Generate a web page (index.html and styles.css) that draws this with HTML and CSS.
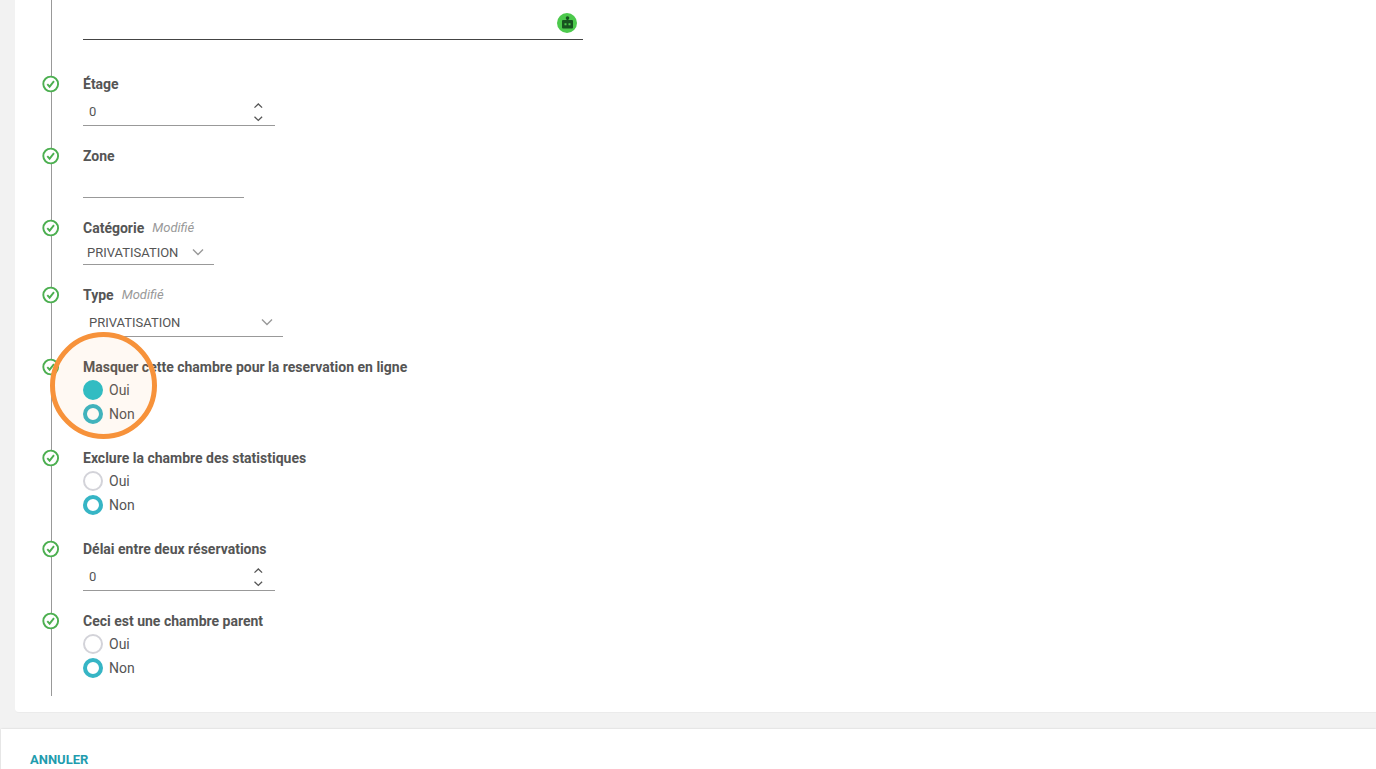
FILE: index.html
```
<!DOCTYPE html>
<html lang="fr">
<head>
    <meta charset="UTF-8">
    <meta name="viewport" content="width=device-width, initial-scale=1.0">
    <title>Chambre</title>
    <link rel="stylesheet" href="styles.css">
</head>
<body>
    <!-- Icônes réutilisées -->
    <svg class="sprite" aria-hidden="true">
        <symbol id="check" viewBox="0 0 18 18">
            <circle cx="8.7" cy="9" r="7.4" fill="#fff" stroke="#4caf50" stroke-width="1.9"/>
            <path d="M5.3 9.2l2.3 2.5 4.4-5.5" fill="none" stroke="#4caf50" stroke-width="1.9"/>
        </symbol>
        <symbol id="up" viewBox="0 0 10 6">
            <path d="M1.5 4.6L5.3 1 9.1 4.6" fill="none" stroke="#555" stroke-width="1.3"/>
        </symbol>
        <symbol id="down" viewBox="0 0 10 6">
            <path d="M1.5 .8L5.3 4.4 9.1 .8" fill="none" stroke="#555" stroke-width="1.3"/>
        </symbol>
    </svg>

    <form id="roomForm">
        <main class="card">
            <div class="timeline">
                <div class="description">
                    <textarea class="line-input" aria-label="Description"></textarea>
                    <button type="button" class="bot" aria-label="Assistant">
                        <svg viewBox="0 0 20 20">
                            <circle cx="10" cy="10" r="10" fill="#4cc94c"/>
                            <circle cx="10.5" cy="5" r="1.8" fill="#17521f"/>
                            <path d="M9.7 5h1.6v3H9.7z" fill="#17521f"/>
                            <rect x="5" y="7" width="11" height="8.5" rx="1" fill="#17521f"/>
                            <path d="M7.5 10.2h2v2h-2zM11.5 10.2h2v2h-2z" fill="#4cc94c"/>
                        </svg>
                    </button>
                </div>

                <div class="field">
                    <svg class="check"><use href="#check"/></svg>
                    <label class="title" for="etage">Étage</label>
                    <div class="number">
                        <input type="text" inputmode="numeric" id="etage" value="0">
                        <div class="spin">
                            <button type="button" aria-label="Augmenter"><svg><use href="#up"/></svg></button>
                            <button type="button" aria-label="Diminuer"><svg><use href="#down"/></svg></button>
                        </div>
                    </div>
                </div>

                <div class="field">
                    <svg class="check"><use href="#check"/></svg>
                    <label class="title" for="zone">Zone</label>
                    <input type="text" class="line-input zone" id="zone">
                </div>

                <div class="field">
                    <svg class="check"><use href="#check"/></svg>
                    <label class="title" for="categorie">Catégorie</label><em>Modifié</em>
                    <div class="select small">
                        <select id="categorie"><option>PRIVATISATION</option></select>
                        <svg viewBox="0 0 12 8"><path d="M1 1.5l5 5 5-5"/></svg>
                    </div>
                </div>

                <div class="field">
                    <svg class="check"><use href="#check"/></svg>
                    <label class="title" for="type">Type</label><em>Modifié</em>
                    <div class="select">
                        <select id="type"><option>PRIVATISATION</option></select>
                        <svg viewBox="0 0 12 8"><path d="M1 1.5l5 5 5-5"/></svg>
                    </div>
                </div>

                <div class="field" role="radiogroup" aria-labelledby="masquer">
                    <svg class="check"><use href="#check"/></svg>
                    <span class="title" id="masquer">Masquer cette chambre pour la reservation en ligne</span>
                    <div class="radios">
                        <label><input type="radio" name="masquer" class="pressed">Oui</label>
                        <label><input type="radio" name="masquer" checked>Non</label>
                    </div>
                    <div class="highlight"></div>
                </div>

                <div class="field" role="radiogroup" aria-labelledby="exclure">
                    <svg class="check"><use href="#check"/></svg>
                    <span class="title" id="exclure">Exclure la chambre des statistiques</span>
                    <div class="radios">
                        <label><input type="radio" name="exclure">Oui</label>
                        <label><input type="radio" name="exclure" checked>Non</label>
                    </div>
                </div>

                <div class="field">
                    <svg class="check"><use href="#check"/></svg>
                    <label class="title" for="delai">Délai entre deux réservations</label>
                    <div class="number">
                        <input type="text" inputmode="numeric" id="delai" value="0">
                        <div class="spin">
                            <button type="button" aria-label="Augmenter"><svg><use href="#up"/></svg></button>
                            <button type="button" aria-label="Diminuer"><svg><use href="#down"/></svg></button>
                        </div>
                    </div>
                </div>

                <div class="field" role="radiogroup" aria-labelledby="parent">
                    <svg class="check"><use href="#check"/></svg>
                    <span class="title" id="parent">Ceci est une chambre parent</span>
                    <div class="radios">
                        <label><input type="radio" name="parent">Oui</label>
                        <label><input type="radio" name="parent" checked>Non</label>
                    </div>
                </div>
            </div>
        </main>

        <footer class="actions">
            <button type="button" class="cancel">ANNULER</button>
        </footer>
    </form>
</body>
</html>
```
FILE: styles.css
```
* {
    box-sizing: border-box;
}

body {
    margin: 0;
    background-color: #f2f2f2;
    color: #555;
    font-family: Roboto, sans-serif;
    font-size: 14px;
    line-height: 20px;
}

input,
select,
textarea,
button {
    margin: 0;
    padding: 0;
    border: none;
    border-radius: 0;
    background: none;
    color: inherit;
    font-family: inherit;
    font-size: 13px;
    outline: none;
}

button {
    cursor: pointer;
}

svg {
    display: block;
}

.sprite {
    position: absolute;
    width: 0;
    height: 0;
}

.card {
    margin: 0 0 16px 15px;
    padding: 0 0 16px 36px;
    background-color: #fff;
    border-bottom: 1px solid #ebebeb;
    border-bottom-left-radius: 4px;
}

/* Ligne verticale qui relie les champs */
.timeline {
    padding: 0 0 16px 31px;
    border-left: 1px solid #999;
}

.description {
    position: relative;
    max-width: 500px;
    margin-bottom: 34px;
}

.line-input {
    display: block;
    width: 100%;
    height: 32px;
    border-bottom: 1px solid #999;
}

.description .line-input {
    height: 40px;
    border-color: #444;
    resize: none;
}

.zone {
    max-width: 161px;
}

.bot {
    position: absolute;
    right: 6px;
    bottom: 7px;
    width: 20px;
    height: 20px;
}

.field {
    position: relative;
    margin-bottom: 20px;
}

.field:last-child {
    margin-bottom: 0;
}

.check {
    position: absolute;
    top: 1px;
    left: -41px;
    width: 18px;
    height: 18px;
}

.title {
    font-weight: bold;
}

em {
    margin-left: 8px;
    color: #999;
    font-size: 13px;
    line-height: 16px;
    vertical-align: 1px;
}

/* Champ numérique */
.number {
    display: flex;
    width: 192px;
    height: 32px;
    padding: 0 11px 0 6px;
    border-bottom: 1px solid #999;
}

.number input {
    flex: 1;
    min-width: 0;
    padding-top: 4px;
}

.spin {
    display: flex;
    flex-direction: column;
    justify-content: flex-end;
}

.spin button {
    width: 12px;
    height: 13px;
}

.spin svg {
    width: 10px;
    height: 6px;
    margin: 0 auto;
}

/* Liste déroulante */
.select {
    position: relative;
    width: 200px;
    height: 32px;
    border-bottom: 1px solid #999;
}

.select select {
    width: 100%;
    height: 100%;
    padding: 4px 6px 0;
    appearance: none;
}

.select svg {
    position: absolute;
    right: 10px;
    bottom: 10px;
    width: 12px;
    height: 8px;
    fill: none;
    stroke: #999;
    stroke-width: 1.4;
    pointer-events: none;
}

.select.small {
    width: 131px;
    height: 27px;
}

.select.small select {
    padding: 2px 4px 0;
}

.select.small svg {
    bottom: 8px;
}

/* Boutons radio */
.radios {
    display: flex;
    flex-direction: column;
    align-items: flex-start;
    padding: 1px 0 2px;
}

.field:last-child .radios {
    padding-bottom: 0;
}

.radios label {
    display: flex;
    align-items: center;
    gap: 6px;
    height: 24px;
}

.radios input {
    width: 20px;
    height: 20px;
    border: 2px solid #d3d3d9;
    border-radius: 50%;
    background-color: #fff;
    appearance: none;
}

.radios input:checked {
    border: 4px solid #36b5c5;
}

.radios input.pressed {
    border-color: #26bfcb;
    background-color: #26bfcb;
}

.highlight {
    position: absolute;
    top: -25px;
    left: -33px;
    width: 107px;
    height: 107px;
    border: 5px solid #f7923a;
    border-radius: 50%;
    background-color: rgba(247, 146, 58, 0.06);
    pointer-events: none;
}

.actions {
    margin-left: 1px;
    padding: 20px 29px 0;
    background-color: #fff;
    box-shadow: 0 0 2px rgba(0, 0, 0, 0.15);
}

.cancel {
    color: #1f9cae;
    font-weight: bold;
    line-height: 20px;
}
```
